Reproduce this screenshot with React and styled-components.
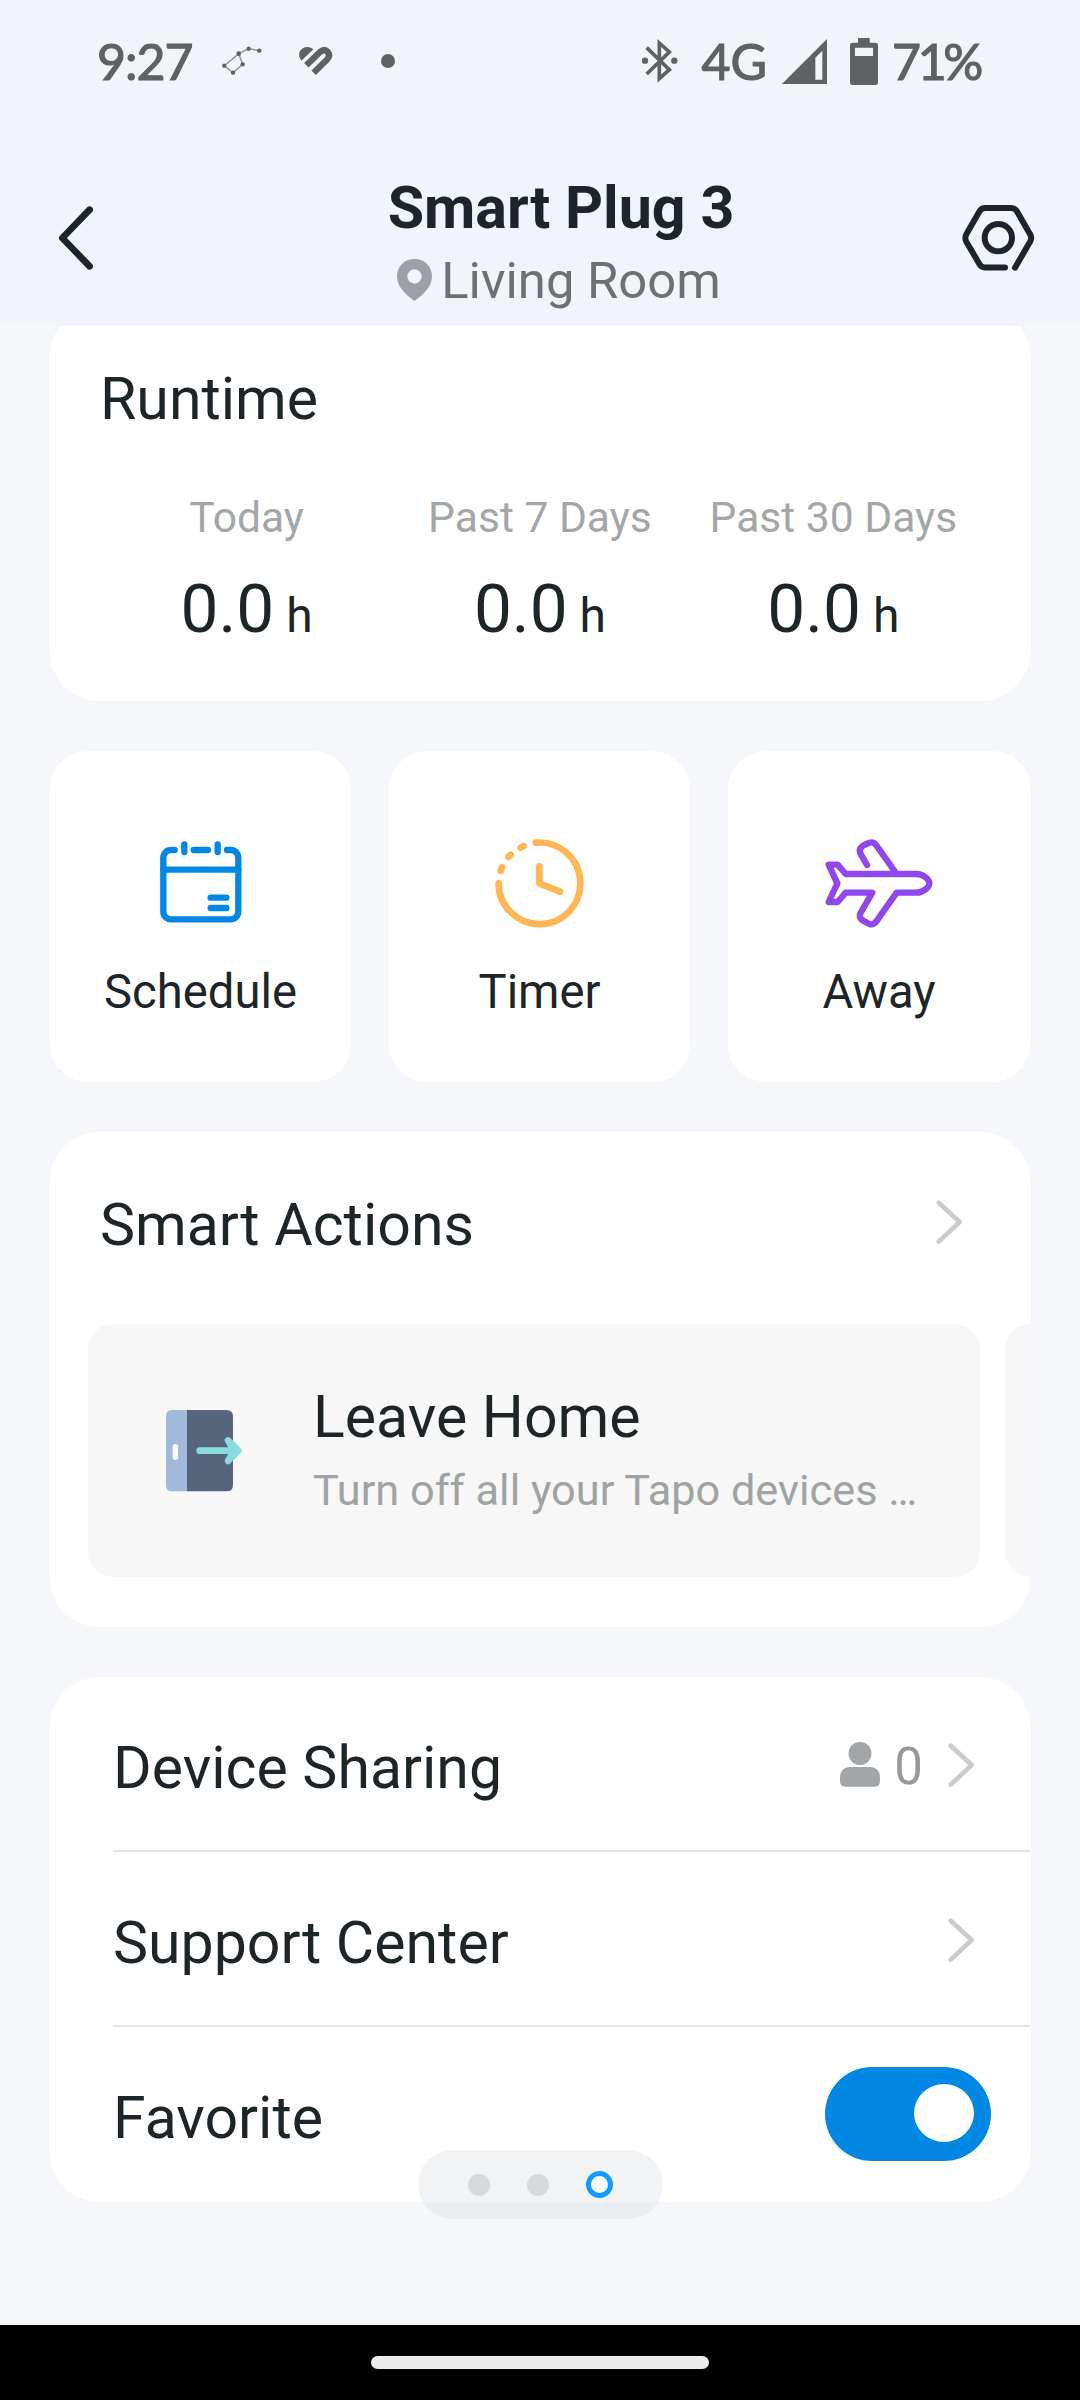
import React, { useState } from "react";
import styled, { createGlobalStyle } from "styled-components";

const GlobalStyle = createGlobalStyle`
  *, *::before, *::after { box-sizing: border-box; }
  body { margin: 0; background: #f5f7fb; }
`;

const ink = "#1e2528";

const Screen = styled.div`
  position: relative;
  display: flex;
  flex-direction: column;
  width: 1080px;
  height: 2400px;
  overflow: hidden;
  background: #f5f7fb;
  color: ${ink};
  font-family: Roboto, "Liberation Sans", sans-serif;
`;

const Icon = styled.svg`
  display: block;
  flex: none;
  overflow: visible;
  fill: none;
  stroke-linecap: round;
  stroke-linejoin: round;
`;

/* Status bar */
const StatusBar = styled.div`
  display: flex;
  justify-content: space-between;
  align-items: center;
  height: 122px;
  padding: 0 100px 0 97px;
  background: #f1f5fa;
  color: #5f6163;
  flex: none;
`;
const StatusGroup = styled.div`
  display: flex;
  align-items: center;
  gap: ${(p) => p.$gap || 0}px;
  margin-left: ${(p) => p.$before || 0}px;
`;
const StatusText = styled.span`
  font-family: Lato, Roboto, sans-serif;
  font-size: 50px;
  line-height: 60px;
  font-weight: 400;
  -webkit-text-stroke: 1.2px currentColor;
  letter-spacing: ${(p) => p.$track || 0}px;
  margin-left: ${(p) => p.$before || 0}px;
`;
const Dot = styled.span`
  width: 14px;
  height: 14px;
  border-radius: 50%;
  background: currentColor;
  margin-left: 11px;
`;

/* Header */
const Header = styled.header`
  display: grid;
  grid-template-columns: 101px 1fr 72px;
  align-items: center;
  height: 204px;
  padding: 28px 46px 0 59px;
  background: #f1f5fa;
  flex: none;
`;
const IconButton = styled.button`
  display: flex;
  padding: 0;
  border: 0;
  background: none;
  color: ${ink};
`;
const Heading = styled.div`
  display: flex;
  flex-direction: column;
  align-items: center;
  padding-top: 13px;
`;
const Title = styled.h1`
  margin: 0;
  font-size: 59.2px;
  line-height: 72px;
  font-weight: 700;
`;
const Location = styled.div`
  display: flex;
  align-items: center;
  gap: 9px;
  padding-right: 4px;
  font-size: 50.8px;
  line-height: 73px;
  color: #6d7174;
`;

/* Content */
const Content = styled.main`
  display: flex;
  flex-direction: column;
  gap: 50px;
  height: 1999px;
  padding: 0 50px;
  overflow: hidden;
  flex: none;
`;
const Card = styled.section`
  flex: none;
  background: #fff;
  border-radius: 50px;
  overflow: hidden;
`;
const RuntimeCard = styled(Card)`
  height: 395px;
  margin-top: -20px;
  padding: 58px 50px 0;
`;
const CardTitle = styled.h2`
  margin: 0;
  font-size: 59px;
  line-height: 70px;
  font-weight: 400;
`;
const Stats = styled.div`
  display: grid;
  grid-template-columns: repeat(3, 1fr);
  margin-top: 55px;
`;
const Stat = styled.div`
  display: flex;
  flex-direction: column;
  align-items: center;
  white-space: nowrap;
`;
const StatLabel = styled.span`
  font-size: 42.6px;
  line-height: 56px;
  color: #a3a7a7;
`;
const StatValue = styled.span`
  margin-top: 24px;
  font-size: 67.5px;
  line-height: 80px;
`;
const StatUnit = styled.span`
  margin-left: 12px;
  font-size: 48px;
`;

const Tiles = styled.nav`
  display: grid;
  grid-template-columns: 301px 301px 1fr;
  gap: 38px;
  flex: none;
`;
const Tile = styled.button`
  display: flex;
  flex-direction: column;
  align-items: center;
  height: 331px;
  padding: 78px 0 0;
  border: 0;
  border-radius: 38px;
  background: #fff;
  color: ${ink};
  font: 400 47.2px/56px Roboto, "Liberation Sans", sans-serif;
`;
const TileLabel = styled.span`
  margin-top: 25px;
`;

const ActionsCard = styled(Card)`
  height: 495px;
`;
const ActionsHeader = styled.div`
  display: flex;
  justify-content: space-between;
  align-items: flex-start;
  height: 192px;
  padding: 58px 68px 0 50px;

  svg {
    margin-top: 10px;
  }
`;
const Scenes = styled.div`
  display: flex;
  gap: 25px;
  padding-left: 38px;
`;
const Scene = styled.article`
  display: flex;
  align-items: center;
  flex: none;
  width: 892px;
  height: 253px;
  padding: 0 50px 0 78px;
  border-radius: 25px;
  background: #f7f7f7;
`;
const SceneText = styled.div`
  margin-left: 71px;
  padding-top: 5px;
  white-space: nowrap;
`;
const SceneName = styled.h3`
  margin: 0;
  font-size: 59px;
  line-height: 74px;
  font-weight: 400;
`;
const SceneHint = styled.p`
  margin: 0;
  font-size: 43.3px;
  line-height: 73px;
  color: #9fa3a3;
`;

const SettingRow = styled.div`
  display: flex;
  justify-content: space-between;
  align-items: center;
  height: 175px;
  margin-left: 63px;
  padding-right: ${(p) => p.$end}px;
  box-shadow: ${(p) => (p.$last ? "none" : "inset 0 -2px #e5e5e5")};
`;
const SettingLabel = styled.span`
  padding-top: 6px;
  font-size: 59px;
`;
const RowEnd = styled.div`
  display: flex;
  align-items: center;
`;
const Count = styled.span`
  margin: 0 25px 0 14px;
  padding-top: 3px;
  font-size: 51px;
  color: #999;
`;
const Switch = styled.button`
  display: flex;
  justify-content: ${(p) => (p.$on ? "flex-end" : "flex-start")};
  align-items: center;
  width: 166px;
  height: 94px;
  margin-bottom: 1px;
  padding: 0 17px 3px;
  border: 0;
  border-radius: 47px;
  background: ${(p) => (p.$on ? "#0288e4" : "#cfd3d6")};
`;
const Knob = styled.span`
  width: 60px;
  height: 58px;
  border-radius: 50%;
  background: #fff;
`;

/* Page indicator floats above the scrolled cards */
const Pager = styled.div`
  position: absolute;
  left: 418px;
  top: 2150px;
  display: flex;
  align-items: center;
  gap: 37px;
  width: 245px;
  height: 69px;
  padding-left: 50px;
  border-radius: 35px;
  background: rgba(208, 215, 222, 0.3);
`;
const PageDot = styled.span`
  width: ${(p) => (p.$active ? 27 : 22)}px;
  height: ${(p) => (p.$active ? 27 : 22)}px;
  border-radius: 50%;
  background: ${(p) => (p.$active ? "#fff" : "#d7d9dd")};
  border: ${(p) => (p.$active ? "5px solid #129bff" : "0")};
`;

const NavBar = styled.div`
  display: flex;
  justify-content: center;
  height: 75px;
  padding-top: 31px;
  background: #000;
  flex: none;
`;
const Handle = styled.span`
  width: 338px;
  height: 13px;
  border-radius: 7px;
  background: #ebebeb;
`;

const Chevron = () => (
  <Icon width="26" height="44" viewBox="0 0 78 132" stroke="#c9cbcd" strokeWidth="14">
    <path d="M8 8 71 66 8 125" />
  </Icon>
);

const ConstellationIcon = () => (
  <Icon width="40" height="30" viewBox="483 82 120 90" stroke="#8b8d90" strokeWidth="4">
    <path d="M595 96 563 90 533 105 490 141 516 162 545 137 533 105" />
    <g fill="#5f6163" stroke="none">
      <circle cx="595" cy="96" r="6.5" />
      <circle cx="563" cy="90" r="6.5" />
      <circle cx="533" cy="105" r="7" />
      <circle cx="490" cy="141" r="6.5" />
      <circle cx="516" cy="162" r="6.5" />
      <circle cx="545" cy="137" r="6.5" />
    </g>
  </Icon>
);

const HeartIcon = () => (
  <Icon width="34" height="28" viewBox="717 87 102 84">
    <path fill="#5f6163" d="M724 128Q713 112 720 99Q729 86 744 87Q754 88 760 94Z" />
    <path stroke="#5f6163" strokeWidth="19" strokeLinecap="butt" d="M739 142 780 102Q793 91 803 101Q812 112 802 124L761 164" />
  </Icon>
);

const BluetoothIcon = () => (
  <Icon width="36" height="42" viewBox="65 62 108 126">
    <path
      stroke="#5f6163"
      strokeWidth="11"
      strokeLinecap="butt"
      strokeLinejoin="miter"
      d="M79 85 147 151 117 178V71L147 98 79 164"
    />
    <circle cx="74" cy="124" r="9.5" fill="#5f6163" />
    <circle cx="162" cy="124" r="9.5" fill="#5f6163" />
  </Icon>
);

const SignalIcon = () => (
  <Icon width="45" height="45" viewBox="488 56 135 135">
    <path fill="#5f6163" fillRule="evenodd" d="M488 191 623 56V191ZM588 112V178H609V91Z" />
  </Icon>
);

const BatteryIcon = () => (
  <Icon width="28" height="47" viewBox="693 51 84 141">
    <path
      fill="#5f6163"
      fillRule="evenodd"
      d="M717 51H752V65H769Q777 65 777 73V184Q777 192 769 192H701Q693 192 693 184V73Q693 65 701 65H717ZM708 80V105H762V80Z"
    />
  </Icon>
);

const BackIcon = () => (
  <Icon width="36" height="64" viewBox="87 139 108 192" stroke="currentColor" strokeWidth="20">
    <path d="M179 150 97 235 179 320" />
  </Icon>
);

const SettingsIcon = () => (
  <Icon width="72" height="66" viewBox="187 134 216 198" stroke="currentColor" strokeWidth="18">
    <path d="M346 322 392 243Q397 233 392 223L353 155Q347 143 335 143H257Q246 143 240 152L200 222Q194 233 200 244L239 311Q245 321 255 321.500H316" />
    <circle cx="296" cy="232" r="41" />
  </Icon>
);

const PinIcon = () => (
  <Icon width="35" height="42" viewBox="0 3 105 126">
    <path
      fill="#9da1a5"
      fillRule="evenodd"
      d="M52.500 0C22 0 0 22 0 52C0 82 24 106 52.500 126C81 106 105 82 105 52C105 22 83 0 52.500 0ZM52.500 31a21.500 21.500 0 1 1 0 43a21.500 21.500 0 1 1 0-43Z"
    />
  </Icon>
);

const ScheduleIcon = () => (
  <Icon width="110" height="110" viewBox="0 0 330 330" stroke="#0288e4" strokeWidth="19">
    <path d="M86 63H75A23 23 0 0 0 52 86V248A23 23 0 0 0 75 271H254A23 23 0 0 0 277 248V86A23 23 0 0 0 254 63H243" />
    <path d="M52 122H277M115 46V69M215 46V69M143 63H186M194 206H241M194 237H241" />
  </Icon>
);

const TimerIcon = () => (
  <Icon width="110" height="110" viewBox="0 0 330 330" stroke="#ffb655" strokeWidth="20">
    <path d="M152 41A122.500 122.500 0 1 1 41 162" />
    <path d="M163 112V163L225 188M47 126 51 115M70 84 77 77M107 56 116 51" />
  </Icon>
);

const AwayIcon = () => (
  <Icon width="110" height="110" viewBox="0 0 330 330" stroke="#9048ec" strokeWidth="19">
    <path d="M65 135H277C296 135 316 150 316 163C316 176 296 191 277 191H218L157 277Q149 289 136 285L117 275Q103 266 109 253L145 191H65L41 219H14L40 163 14 107H41Z" />
    <path d="M218 135 157 49Q149 37 136 41L117 50Q103 59 109 73L129 108" />
  </Icon>
);

const LeaveIcon = () => (
  <Icon width="76" height="82" viewBox="0 0 228 246">
    <path fill="#56647c" d="M62 0H181Q201 0 201 20V224Q201 244 181 244H62Z" />
    <path fill="#a2b8db" d="M18 0H63V244H18Q0 244 0 226V18Q0 0 18 0Z" />
    <path stroke="#fff" strokeWidth="16" d="M28 110V142" />
    <path fill="#8adbdb" stroke="#8adbdb" strokeWidth="20" d="M101 122H210M186 91 217 122 186 153 204 122Z" />
  </Icon>
);

const PersonIcon = () => (
  <Icon width="40" height="45" viewBox="0 0 120 135">
    <circle cx="60" cy="34.500" r="34.500" fill="#a2a6a9" />
    <path fill="#a2a6a9" d="M32 75H88Q120 76 120 108V117Q120 134 104 134H16Q0 134 0 117V108Q0 76 32 75Z" />
  </Icon>
);

const stats = [
  ["Today", "0.0"],
  ["Past 7 Days", "0.0"],
  ["Past 30 Days", "0.0"],
];

const tiles = [
  ["Schedule", ScheduleIcon],
  ["Timer", TimerIcon],
  ["Away", AwayIcon],
];

export default function App() {
  const [favorite, setFavorite] = useState(true);

  return (
    <Screen>
      <GlobalStyle />
      <StatusBar>
        <StatusGroup $gap={37}>
          <StatusText $track={-1}>9:27</StatusText>
          <StatusGroup $before={-8}>
            <ConstellationIcon />
          </StatusGroup>
          <HeartIcon />
          <Dot />
        </StatusGroup>
        <StatusGroup>
          <BluetoothIcon />
          <StatusText $before={24}>4G</StatusText>
          <StatusGroup $gap={23} $before={15}>
            <SignalIcon />
            <BatteryIcon />
          </StatusGroup>
          <StatusText $before={14} $track={-3.4}>71%</StatusText>
        </StatusGroup>
      </StatusBar>
      <Header>
        <IconButton aria-label="Back"><BackIcon /></IconButton>
        <Heading>
          <Title>Smart Plug 3</Title>
          <Location><PinIcon />Living Room</Location>
        </Heading>
        <IconButton aria-label="Settings"><SettingsIcon /></IconButton>
      </Header>

      <Content>
        <RuntimeCard>
          <CardTitle>Runtime</CardTitle>
          <Stats>
            {stats.map(([label, value]) => (
              <Stat key={label}>
                <StatLabel>{label}</StatLabel>
                <StatValue>{value}<StatUnit>h</StatUnit></StatValue>
              </Stat>
            ))}
          </Stats>
        </RuntimeCard>

        <Tiles>
          {tiles.map(([label, TileIcon]) => (
            <Tile key={label}>
              <TileIcon />
              <TileLabel>{label}</TileLabel>
            </Tile>
          ))}
        </Tiles>

        <ActionsCard>
          <ActionsHeader>
            <CardTitle>Smart Actions</CardTitle>
            <Chevron />
          </ActionsHeader>
          <Scenes>
            <Scene>
              <LeaveIcon />
              <SceneText>
                <SceneName>Leave Home</SceneName>
                <SceneHint>Turn off all your Tapo devices …</SceneHint>
              </SceneText>
            </Scene>
            <Scene />
          </Scenes>
        </ActionsCard>

        <Card>
          <SettingRow $end={56}>
            <SettingLabel>Device Sharing</SettingLabel>
            <RowEnd>
              <PersonIcon />
              <Count>0</Count>
              <Chevron />
            </RowEnd>
          </SettingRow>
          <SettingRow $end={56}>
            <SettingLabel>Support Center</SettingLabel>
            <Chevron />
          </SettingRow>
          <SettingRow $end={39} $last>
            <SettingLabel>Favorite</SettingLabel>
            <Switch $on={favorite} onClick={() => setFavorite(!favorite)} aria-label="Favorite">
              <Knob />
            </Switch>
          </SettingRow>
        </Card>
      </Content>

      <Pager>
        <PageDot />
        <PageDot />
        <PageDot $active />
      </Pager>

      <NavBar><Handle /></NavBar>
    </Screen>
  );
}
